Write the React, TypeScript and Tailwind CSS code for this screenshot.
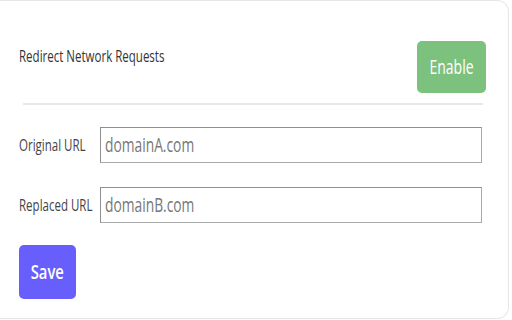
import React from 'react';

const squeeze = 'inline-block origin-left scale-x-[0.72] whitespace-nowrap';

function UrlRow({ label, value }: { label: string; value: string }) {
  return (
    <div className="mr-[4px] flex items-center">
      <div className="w-[81px] text-[16px] text-[#444]">
        <span className={squeeze}>{label}</span>
      </div>
      <div className="flex h-[36px] flex-1 items-center border border-[#a9a9a9] border-t-[#8f8f8f] border-l-[#8f8f8f] px-[4px] text-[20px] text-[#777]">
        <span className="inline-block origin-left scale-x-[0.69] whitespace-nowrap">{value}</span>
      </div>
    </div>
  );
}

export default function App() {
  return (
    <div
      className="h-[320px] w-[512px] bg-white"
      style={{ fontFamily: '"Open Sans", "Liberation Sans", sans-serif' }}
    >
      <div className="h-[319px] w-[509px] rounded-r-[12px] border-t border-r border-b border-[#e6e6e6] pl-[19px] pr-[22px]">
        <div className="flex items-start justify-between pt-[40px]">
          <div className="pt-[3px] text-[16px] text-[#333]">
            <span className={squeeze}>Redirect Network Requests</span>
          </div>
          <button className="flex h-[52px] w-[69px] items-center justify-center rounded-[5px] bg-[#7cc17e] text-[20px] text-white">
            <span className="inline-block scale-x-[0.7] whitespace-nowrap">Enable</span>
          </button>
        </div>
        <div className="mt-[10px] ml-[4px] mr-[3px] h-[2px] bg-[#e8e8e8]" />
        <div className="mt-[22px] flex flex-col gap-[24px]">
          <UrlRow label="Original URL" value="domainA.com" />
          <UrlRow label="Replaced URL" value="domainB.com" />
        </div>
        <button className="mt-[22px] flex h-[54px] w-[57px] items-center justify-center rounded-[5px] bg-[#675efc] text-[19px] font-semibold text-white">
          <span className="inline-block scale-x-[0.78] whitespace-nowrap">Save</span>
        </button>
      </div>
    </div>
  );
}
